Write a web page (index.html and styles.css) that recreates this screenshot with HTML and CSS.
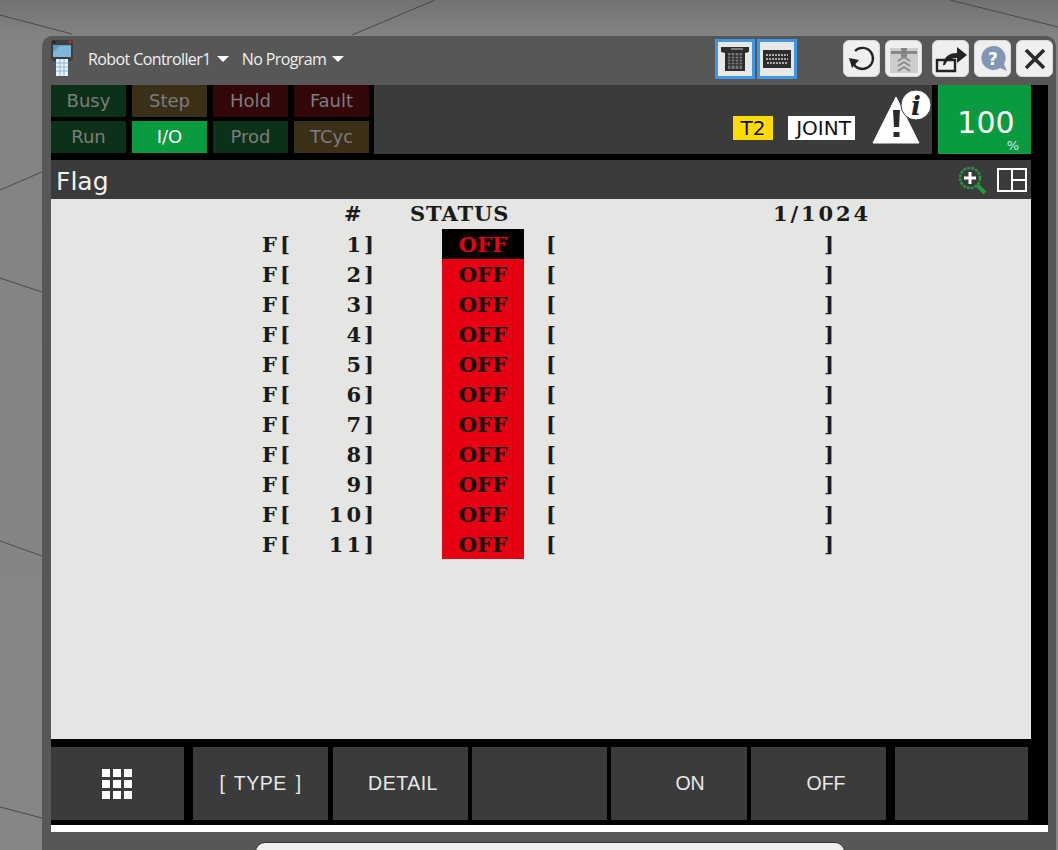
FILE: index.html
```html
<!DOCTYPE html>
<html lang="en">
<head>
    <meta charset="UTF-8">
    <title>Flag</title>
    <link rel="stylesheet" href="styles.css">
</head>
<body>
    <svg class="backdrop" width="1058" height="850">
        <path d="M0 15L72 34M0 190L42 172M352 35L435 0M950 0L1058 27M0 278L42 292M0 541L42 556M0 807L42 818" fill="none" stroke="#4a4a4a"/>
    </svg>

    <div class="window">
        <div class="titlebar">
            <svg class="pendant" width="22" height="36" viewBox="0 0 22 36">
                <rect x="0" y="0" width="22" height="21" rx="3" fill="#3e3e3e"/>
                <circle cx="3" cy="2" r="1.5" fill="#222"/>
                <circle cx="19" cy="2" r="1.5" fill="#d22"/>
                <rect x="2" y="5" width="18" height="12" fill="#5b9cc9"/>
                <path d="M2 17V12L9 6L20 6V17Z" fill="#7fb6dc"/>
                <rect x="5" y="19" width="12" height="17" fill="#e9f2f8"/>
                <path d="M5 23H17M5 27H17M5 31H17M9 19V36M13 19V36" stroke="#8ab6d6"/>
            </svg>
            <span class="menu">Robot Controller1<i class="caret"></i></span>
            <span class="menu">No Program<i class="caret"></i></span>
            <div class="view-btns">
                <button class="view-btn">
                    <svg width="28" height="26" viewBox="0 0 28 26">
                        <path d="M0 1H28V6L24 7V25H4V7L0 6Z" fill="#2d2d2d"/>
                        <path d="M7 7H21V23H7Z" fill="#777"/>
                        <path d="M7 10H21M7 13H21M7 16H21M7 19H21M10 7V23M14 7V23M18 7V23" stroke="#222"/>
                        <path d="M10 3H22" stroke="#ccc"/>
                    </svg>
                </button>
                <button class="view-btn">
                    <svg width="28" height="18" viewBox="0 0 28 18">
                        <rect width="28" height="18" fill="#2d2d2d"/>
                        <path d="M3 5H25M3 9H25M4 13H24" stroke="#aaa" stroke-width="2" stroke-dasharray="2 1"/>
                    </svg>
                </button>
            </div>
            <div class="tool-btns">
                <button class="tool-btn">
                    <svg width="28" height="28" viewBox="0 0 28 28">
                        <path d="M7 6A10.5 10.5 0 1 1 5 18" fill="none" stroke="#222" stroke-width="2.4"/>
                        <path d="M1 13L11 15L4 23Z" fill="#222"/>
                    </svg>
                </button>
                <button class="tool-btn tool-off">
                    <svg width="28" height="28" viewBox="0 0 28 28">
                        <rect x="0" y="3" width="28" height="25" fill="#cdcdcd"/>
                        <path d="M1 6H27V9H1ZM11 3H17V12H11Z" fill="#858585"/>
                        <path d="M8 16L14 12L20 16M8 21L14 17L20 21M8 26L14 22L20 26" fill="none" stroke="#858585" stroke-width="1.6"/>
                    </svg>
                </button>
                <button class="tool-btn tool-gap">
                    <svg width="32" height="28" viewBox="0 0 32 28">
                        <path d="M2 15H20V26H2Z" fill="none" stroke="#222" stroke-width="2.4"/>
                        <path d="M8 20C9 11 15 8 22 8V2L32 10L22 18V13C16 13 12 15 10 20Z" fill="#222"/>
                    </svg>
                </button>
                <button class="tool-btn">
                    <svg width="30" height="30" viewBox="0 0 30 30">
                        <path d="M15 2A12 12 0 1 0 22 24L29 27L26 20A12 12 0 0 0 15 2Z" fill="#8297b8"/>
                        <text x="15" y="21" class="help-mark">?</text>
                    </svg>
                </button>
                <button class="tool-btn">
                    <svg width="24" height="24" viewBox="0 0 24 24">
                        <path d="M3 3L21 21M21 3L3 21" stroke="#2a2a2a" stroke-width="3.6"/>
                    </svg>
                </button>
            </div>
        </div>

        <div class="screen">
            <div class="status-row">
                <div class="lamps">
                    <div class="lamp lamp-green">Busy</div>
                    <div class="lamp lamp-amber">Step</div>
                    <div class="lamp lamp-red">Hold</div>
                    <div class="lamp lamp-red">Fault</div>
                    <div class="lamp lamp-green">Run</div>
                    <div class="lamp lamp-on">I/O</div>
                    <div class="lamp lamp-green">Prod</div>
                    <div class="lamp lamp-amber">TCyc</div>
                </div>
                <div class="mode-panel">
                    <span class="tag tag-yellow">T2</span>
                    <span class="tag tag-white">JOINT</span>
                    <svg class="alert" width="61" height="62" viewBox="0 0 61 62">
                        <path d="M24 12L1 58H47Z" fill="#fff" stroke="#fff" stroke-linejoin="round"/>
                        <path d="M21 25H28L27 42H22Z" fill="#2a2a2a"/>
                        <rect x="21.500" y="47" width="6" height="5" fill="#2a2a2a"/>
                        <circle cx="44" cy="20" r="15" fill="#fff" stroke="#3c3c3c"/>
                        <text x="44" y="30" class="info-mark">i</text>
                    </svg>
                </div>
                <div class="override">
                    <span class="override-num">100</span>
                    <span class="override-unit">%</span>
                </div>
            </div>

            <div class="page-head">
                <span class="page-title">Flag</span>
                <svg class="zoom-icon" width="30" height="30" viewBox="0 0 30 30">
                    <circle cx="13" cy="13" r="10" fill="none" stroke="#1f9a3e" stroke-width="2.4" stroke-dasharray="3 1"/>
                    <path d="M13 7V19M7 13H19" stroke="#fff" stroke-width="3"/>
                    <path d="M20 20L28 28" stroke="#1f9a3e" stroke-width="4"/>
                </svg>
                <svg class="split-icon" width="30" height="24" viewBox="0 0 30 24">
                    <path d="M1 1H29V23H1ZM15 1V23M15 12H29" fill="none" stroke="#fff" stroke-width="2"/>
                </svg>
            </div>

            <div class="list">
                <div class="list-head">
                    <span class="head-num">#</span>
                    <span class="head-status">STATUS</span>
                    <span class="head-page">1/1024</span>
                </div>
                <div class="flag-row"><span class="pre">F[</span><span class="idx">1]</span><span class="val val-sel">OFF</span><span>[</span><span>]</span></div>
                <div class="flag-row"><span class="pre">F[</span><span class="idx">2]</span><span class="val">OFF</span><span>[</span><span>]</span></div>
                <div class="flag-row"><span class="pre">F[</span><span class="idx">3]</span><span class="val">OFF</span><span>[</span><span>]</span></div>
                <div class="flag-row"><span class="pre">F[</span><span class="idx">4]</span><span class="val">OFF</span><span>[</span><span>]</span></div>
                <div class="flag-row"><span class="pre">F[</span><span class="idx">5]</span><span class="val">OFF</span><span>[</span><span>]</span></div>
                <div class="flag-row"><span class="pre">F[</span><span class="idx">6]</span><span class="val">OFF</span><span>[</span><span>]</span></div>
                <div class="flag-row"><span class="pre">F[</span><span class="idx">7]</span><span class="val">OFF</span><span>[</span><span>]</span></div>
                <div class="flag-row"><span class="pre">F[</span><span class="idx">8]</span><span class="val">OFF</span><span>[</span><span>]</span></div>
                <div class="flag-row"><span class="pre">F[</span><span class="idx">9]</span><span class="val">OFF</span><span>[</span><span>]</span></div>
                <div class="flag-row"><span class="pre">F[</span><span class="idx">10]</span><span class="val">OFF</span><span>[</span><span>]</span></div>
                <div class="flag-row"><span class="pre">F[</span><span class="idx">11]</span><span class="val">OFF</span><span>[</span><span>]</span></div>
            </div>

            <div class="fkeys">
                <div class="fkey fkey-menu">
                    <svg width="30" height="30" viewBox="0 0 30 30" fill="#fff">
                        <path d="M0 0H8V8H0ZM11 0H19V8H11ZM22 0H30V8H22ZM0 11H8V19H0ZM11 11H19V19H11ZM22 11H30V19H22ZM0 22H8V30H0ZM11 22H19V30H11ZM22 22H30V30H22Z"/>
                    </svg>
                </div>
                <div class="fkey fkey-type">[ TYPE ]</div>
                <div class="fkey fkey-detail">DETAIL</div>
                <div class="fkey"></div>
                <div class="fkey fkey-on">ON</div>
                <div class="fkey fkey-off">OFF</div>
                <div class="fkey fkey-last"></div>
            </div>
        </div>
        <div class="white-strip"></div>
        <div class="lower-card"></div>
    </div>
</body>
</html>
```

FILE: styles.css
```css
* {
    margin: 0;
    padding: 0;
    box-sizing: border-box;
}

body {
    position: relative;
    width: 1058px;
    height: 850px;
    overflow: hidden;
    padding: 36px 0 0 42px;
    background: linear-gradient(180deg, #727272 0, #838383 36px, #868686 100%);
    font-family: 'DejaVu Sans', sans-serif;
}

.backdrop {
    position: absolute;
    left: 0;
    top: 0;
}

.window {
    position: relative;
    width: 1014px;
    height: 814px;
    padding-left: 9px;
    background: #575757;
    border-radius: 10px 10px 0 0;
}

/* top bar */
.titlebar {
    display: flex;
    align-items: flex-start;
    height: 49px;
}

.pendant {
    margin: 4px 15px 0 0;
}

.menu {
    display: flex;
    align-items: center;
    margin: 12px 13px 0 0;
    font-family: 'Open Sans', sans-serif;
    font-size: 16px;
    letter-spacing: -0.6px;
    color: #f0f0f0;
}

.caret {
    width: 0;
    height: 0;
    margin-left: 6px;
    border-left: 6px solid transparent;
    border-right: 6px solid transparent;
    border-top: 6px solid #fff;
}

.view-btns {
    display: flex;
    gap: 2px;
    margin: 3px 46px 0 auto;
}

.view-btn {
    display: flex;
    align-items: center;
    justify-content: center;
    width: 40px;
    height: 40px;
    background: #e6e9e8;
    border: 3px solid #3f97e8;
}

.tool-btns {
    display: flex;
    gap: 5px;
    margin: 4px 3px 0 0;
}

.tool-btn {
    display: flex;
    align-items: center;
    justify-content: center;
    width: 37px;
    height: 37px;
    background: #efefef;
    border: 1px solid #d8d8d8;
    border-radius: 6px;
}

.tool-gap {
    margin-left: 5px;
}

.help-mark {
    font-family: 'DejaVu Sans', sans-serif;
    font-size: 17px;
    font-weight: bold;
    fill: #fff;
    text-anchor: middle;
}

.info-mark {
    font-family: 'DejaVu Serif', serif;
    font-size: 26px;
    font-weight: bold;
    font-style: italic;
    fill: #222;
    text-anchor: middle;
}

/* black panel */
.screen {
    width: 997px;
    height: 740px;
    background: #000;
}

.status-row {
    display: flex;
    height: 75px;
}

.lamps {
    display: grid;
    grid-template-columns: repeat(4, 75px);
    grid-auto-rows: 32px;
    column-gap: 6px;
    row-gap: 4px;
    width: 323px;
}

.lamp {
    display: flex;
    align-items: center;
    justify-content: center;
    padding-bottom: 2px;
    font-size: 18px;
    color: #7d7d7d;
}

.lamp-green { background: #0b3219; }
.lamp-amber { background: #3b2f18; }
.lamp-red { background: #33060a; }
.lamp-on { background: #0a9a3f; color: #fff; }

.mode-panel {
    position: relative;
    display: flex;
    align-items: flex-start;
    width: 558px;
    height: 69px;
    padding: 31px 0 0 359px;
    background: #3b3b3b;
}

.tag {
    display: flex;
    align-items: center;
    justify-content: center;
    height: 24px;
    font-size: 20px;
    color: #111;
}

.tag-yellow {
    width: 40px;
    margin-right: 15px;
    background: #ffdc00;
}

.tag-white {
    width: 67px;
    padding-left: 4px;
    background: #fff;
}

.alert {
    position: absolute;
    right: -1px;
    top: 0;
}

.override {
    position: relative;
    width: 93px;
    height: 69px;
    margin-left: 6px;
    padding-left: 3px;
    background: #0a9a3f;
    color: #fff;
    text-align: center;
}

.override-num {
    display: block;
    padding-top: 20px;
    font-size: 30px;
}

.override-unit {
    position: absolute;
    right: 12px;
    bottom: 1px;
    font-size: 13px;
    color: #d8e6f0;
}

.page-head {
    display: flex;
    align-items: center;
    width: 980px;
    height: 39px;
    padding: 0 4px 0 5px;
    background: #3b3b3b;
}

.page-title {
    margin-right: auto;
    padding-top: 3px;
    font-size: 25px;
    color: #f2f2f2;
}

.zoom-icon {
    margin-right: 10px;
}

/* flag list */
.list {
    width: 980px;
    height: 540px;
    background: #e5e5e3;
    font-family: 'DejaVu Serif', serif;
    font-weight: bold;
    font-size: 21px;
    color: #1a1a1a;
}

.list-head {
    display: flex;
    align-items: center;
    height: 30px;
    padding: 0 0 2px 293px;
}

.head-num {
    width: 66px;
}

.head-status {
    width: 363px;
    letter-spacing: 0.9px;
}

.head-page {
    letter-spacing: 2.9px;
}

.flag-row {
    display: grid;
    grid-template-columns: 30px 85px 169px 278px auto;
    align-items: center;
    height: 30px;
    padding-left: 211px;
}

.pre {
    letter-spacing: 3px;
}

.idx {
    text-align: right;
    letter-spacing: 3px;
}

.val {
    display: flex;
    align-items: center;
    justify-content: center;
    width: 82px;
    height: 30px;
    margin-left: 65px;
    letter-spacing: 0.2px;
    background: #e60012;
    color: #111;
}

.val-sel {
    background: #000;
    color: #e60012;
}

.fkeys {
    display: flex;
    gap: 4px;
    height: 73px;
    margin-top: 8px;
}

.fkey {
    display: flex;
    flex: 0 0 135px;
    align-items: center;
    justify-content: center;
    background: #3b3b3b;
    font-family: 'Liberation Sans', sans-serif;
    font-size: 19.5px;
    color: #e8e8e8;
}

.fkey-menu {
    flex-basis: 133px;
    padding-right: 2px;
}

.fkey-type {
    margin-left: 5px;
    word-spacing: 3px;
    letter-spacing: 0.5px;
}

.fkey-detail {
    margin-left: 1px;
    padding-left: 5px;
    letter-spacing: 0.5px;
}

.fkey-on {
    flex-basis: 136px;
    padding-left: 22px;
}

.fkey-off {
    padding-left: 15px;
}

.fkey-last {
    flex-basis: 133px;
    margin-left: 5px;
}

.white-strip {
    width: 997px;
    height: 7px;
    background: #fff;
}

.lower-card {
    position: absolute;
    left: 213px;
    top: 806px;
    width: 590px;
    height: 20px;
    background: #efefef;
    border: 1px solid #333;
    border-radius: 10px 10px 0 0;
}
```
